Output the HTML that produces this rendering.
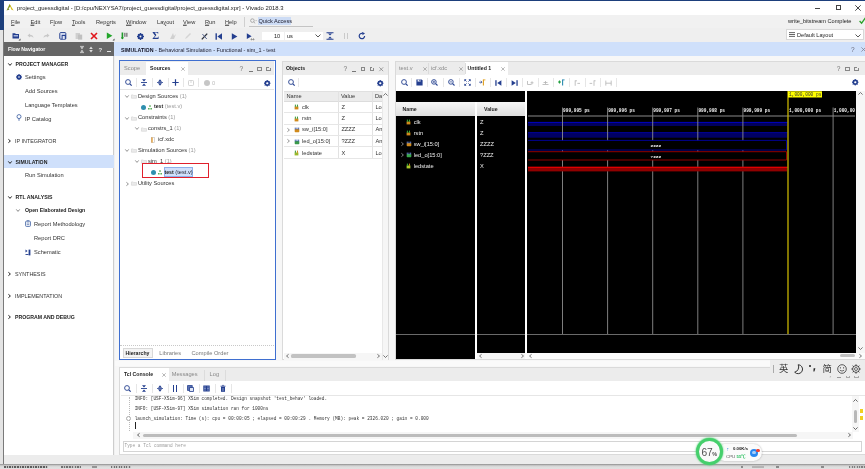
<!DOCTYPE html>
<html><head><meta charset="utf-8"><title>Vivado</title>
<style>
*{box-sizing:border-box;margin:0;padding:0}
html,body{width:865px;height:469px;overflow:hidden;background:#f0f0f0}
body{position:relative;font-family:"Liberation Sans","Noto Sans CJK SC",sans-serif;font-size:5.7px;color:#333;line-height:1}
.a{position:absolute}
#root{position:absolute;left:0;top:0;width:865px;height:469px;will-change:transform;transform:translateZ(0)}
.t{position:absolute;white-space:nowrap;transform:translateY(-40%);line-height:1}
.b{font-weight:bold;font-size:5.2px;color:#222}
.g{color:#999}
.w{color:#eee}
.c{font-family:"Liberation Mono",monospace;font-size:4.47px;color:#333}
svg{position:absolute;overflow:visible}
svg.sig{transform:scale(.86)}
</style></head><body><div id="root">
<!-- window frame / backdrop -->
<div class="a" id="desk" style="left:0;top:0;width:4px;height:30px;background:#1d3f7c"></div>
<div class="a" style="left:0;top:30px;width:3px;height:439px;background:#e4e4e4"></div>
<div class="a" style="left:2.8px;top:30px;width:1.4px;height:434px;background:#7a7a7a"></div>
<div class="a" style="left:0;top:0;width:865px;height:1px;background:#1d3f7c"></div>
<!-- title bar -->
<div class="a" id="title" style="left:4px;top:1px;width:861px;height:14px;background:#fff"></div>
<svg style="left:6px;top:3px" width="8" height="9" viewBox="0 0 8 9"><path d="M0.5 7.5 L3.6 1 L5 3.6 L2.6 5 Z" fill="#8a9a1c"/><path d="M3.6 1 L7.6 7.6 L5.2 6.4 Z" fill="#d8c020"/><path d="M0.5 7.5 L2.6 5 L3.4 6.6Z" fill="#6a7a10"/></svg>
<div class="t" style="left:17px;top:8px;font-size:5.9px;color:#222" id="ttl">project_guessdigital - [D:/cpu/NEXYSA7/project_guessdigital/project_guessdigital.xpr] - Vivado 2018.3</div>
<div class="a" style="left:815px;top:7.5px;width:5px;height:1px;background:#444"></div>
<div class="a" style="left:835.5px;top:4.5px;width:5.5px;height:5.5px;border:1px solid #444"></div>
<svg style="left:855px;top:4.5px" width="6" height="6" viewBox="0 0 6 6"><path d="M0.3 0.3L5.7 5.7M5.7 0.3L0.3 5.7" stroke="#333" stroke-width="0.9" fill="none"/></svg>

<!-- menu + toolbar -->
<div class="a" id="menubar" style="left:4px;top:15px;width:861px;height:13px;background:#f1f1f1"></div>
<div class="a" id="toolbar" style="left:4px;top:28px;width:861px;height:14px;background:#efefef"></div>
<div class="t m" style="left:11px;top:21.5px"><u>F</u>ile</div>
<div class="t m" style="left:30.5px;top:21.5px"><u>E</u>dit</div>
<div class="t m" style="left:50px;top:21.5px">F<u>l</u>ow</div>
<div class="t m" style="left:72px;top:21.5px"><u>T</u>ools</div>
<div class="t m" style="left:96px;top:21.5px">Rep<u>o</u>rts</div>
<div class="t m" style="left:126px;top:21.5px"><u>W</u>indow</div>
<div class="t m" style="left:157px;top:21.5px">La<u>y</u>out</div>
<div class="t m" style="left:183px;top:21.5px"><u>V</u>iew</div>
<div class="t m" style="left:205px;top:21.5px"><u>R</u>un</div>
<div class="t m" style="left:225px;top:21.5px"><u>H</u>elp</div>
<div class="a" style="left:244px;top:17px;width:1px;height:10px;background:#d0d0d0"></div>
<svg style="left:250px;top:18px" width="7" height="6" viewBox="0 0 7 6"><circle cx="2.4" cy="2.6" r="1.8" fill="none" stroke="#999" stroke-width="0.8"/><path d="M3.8 4L5 5.2" stroke="#999" stroke-width="0.8"/><path d="M5.5 2.6h1.3" stroke="#999" stroke-width="0.6"/></svg>
<div class="a" style="left:258px;top:17px;width:33px;height:8px;background:#cddcf5"></div>
<div class="t" style="left:258.5px;top:21px;font-size:5.6px;color:#223">Quick Access</div>
<div class="a" style="left:249px;top:26px;width:64px;height:1px;background:#c4c4c4"></div>
<div class="t" style="left:788px;top:21px;font-size:5.6px;color:#222" id="wbc">write_bitstream Complete</div>
<svg style="left:858.5px;top:17px" width="7" height="7" viewBox="0 0 7 7"><path d="M0.6 4L2.6 6.2L6.4 0.8" stroke="#2aa22a" stroke-width="1.3" fill="none"/></svg>
<!-- toolbar icons -->
<svg style="left:12px;top:32px" width="9" height="9" viewBox="0 0 9 9"><path d="M0.5 1.2h2.6l0.7 0.8h3.2v4.6h-6.5Z" fill="#243f8f"/><rect x="1.6" y="3.2" width="4.4" height="1.2" fill="#c8d4ee"/><path d="M6.5 8.5h2v-2z" fill="#444"/></svg>
<svg style="left:27px;top:33px" width="7" height="6" viewBox="0 0 7 6"><path d="M0.5 2.5L3 0.5V1.8C5 1.8 6.3 3 6.5 5C5.6 3.8 4.6 3.4 3 3.4V4.6Z" fill="#c8c8c8"/></svg>
<svg style="left:43px;top:33px" width="7" height="6" viewBox="0 0 7 6"><path d="M6.5 2.5L4 0.5V1.8C2 1.8 .7 3 .5 5C1.4 3.8 2.4 3.4 4 3.4V4.6Z" fill="#c8c8c8"/></svg>
<svg style="left:59px;top:32px" width="8" height="8" viewBox="0 0 8 8"><rect x="0.8" y="0.6" width="6" height="6.6" rx="0.8" fill="#e4eaf8" stroke="#243f8f" stroke-width="1"/><rect x="2.6" y="2.8" width="4.2" height="4.4" fill="#243f8f"/><rect x="3.6" y="4" width="2.2" height="3.2" fill="#dfe6f5"/></svg>
<svg style="left:75px;top:32px" width="8" height="8" viewBox="0 0 8 8"><rect x="0.6" y="1" width="4.4" height="6" fill="#cfcfcf"/><rect x="3" y="2.6" width="4.2" height="5" fill="#c0c0c0"/></svg>
<svg style="left:90px;top:32px" width="8" height="8" viewBox="0 0 8 8"><path d="M1 1L7 7M7 1L1 7" stroke="#e0161c" stroke-width="1.6"/></svg>
<svg style="left:106px;top:32px" width="9" height="9" viewBox="0 0 9 9"><path d="M0.8 0.6L6.4 3.8L0.8 7Z" fill="#22a52a"/><path d="M6.5 8.5h2v-2z" fill="#444"/></svg>
<svg style="left:121px;top:32px" width="8" height="8" viewBox="0 0 8 8"><rect x="0.6" y="0.5" width="1.6" height="6.5" fill="#1f9a2a"/><rect x="3.2" y="0.8" width="1.3" height="4" fill="#777"/><rect x="5.2" y="0.8" width="1.3" height="4" fill="#777"/><path d="M0 5.2h2.8L1.4 7.6Z" fill="#1f9a2a"/></svg>
<svg style="left:137px;top:32.5px" width="7" height="7" viewBox="0 0 8 8" id="gear1"><circle cx="4" cy="4" r="2.4" fill="none" stroke="#243f8f" stroke-width="2"/><path d="M4 0v8M0 4h8M1.2 1.2l5.6 5.6M6.8 1.2L1.2 6.8" stroke="#243f8f" stroke-width="1.2"/><circle cx="4" cy="4" r="1.1" fill="#efefef"/></svg>
<div class="t" style="left:152.3px;top:35.6px;font-size:10.5px;color:#243f8f;font-weight:bold;font-family:'Liberation Serif',serif;transform:translateY(-50%)">Σ</div>
<svg style="left:169px;top:32px" width="8" height="8" viewBox="0 0 8 8"><path d="M1 7L4 1L5 4L7 2L5 7Z" fill="#d0d0d0"/></svg>
<svg style="left:184px;top:32px" width="8" height="8" viewBox="0 0 8 8"><path d="M1 7L2 5L6 1L7 2L3 6Z" fill="#d4d4d4"/></svg>
<svg style="left:200.5px;top:32.5px" width="7" height="7" viewBox="0 0 7 7"><path d="M0.8 6.4L6.2 0.6" stroke="#2a2f3a" stroke-width="1.3"/><path d="M1.4 1L5.8 6" stroke="#4a5a8a" stroke-width="0.9"/></svg>
<svg style="left:215px;top:32.5px" width="8" height="7" viewBox="0 0 8 7"><rect x="0.5" y="0.3" width="1.4" height="6.4" fill="#243f8f"/><path d="M7 0.3L2.4 3.5L7 6.7Z" fill="#243f8f"/></svg>
<svg style="left:231px;top:32.5px" width="7" height="7" viewBox="0 0 7 7"><path d="M0.8 0.3L6.4 3.5L0.8 6.7Z" fill="#243f8f"/></svg>
<svg style="left:246px;top:32.5px" width="9" height="8" viewBox="0 0 9 8"><path d="M0.8 0.3L5.6 3.2L0.8 6.1Z" fill="#243f8f"/><path d="M4.5 6.5h4M5.5 5.2v2.2M7.5 5.2v2.2" stroke="#888" stroke-width="0.7"/></svg>
<div class="a" style="left:261.5px;top:31.5px;width:22px;height:8px;background:#fff"></div>
<div class="t" style="left:274px;top:35.5px;font-size:5.6px;color:#222">10</div>
<div class="a" style="left:285px;top:31.5px;width:37.5px;height:8px;background:#fff"></div>
<div class="t" style="left:287px;top:35.5px;font-size:5.6px;color:#222">us</div>
<svg style="left:315px;top:33.8px" width="6" height="4" viewBox="0 0 6 4"><path d="M0.5 0.5L3 3L5.5 0.5" stroke="#444" stroke-width="0.9" fill="none"/></svg>
<svg style="left:326px;top:32px" width="8" height="8" viewBox="0 0 8 8"><path d="M0.5 0.8h7M0.5 7.2h7" stroke="#243f8f" stroke-width="1.1"/><path d="M2 1.5h4L4 3.6Z M2 6.5h4L4 4.4Z" fill="#243f8f"/></svg>
<div class="a" style="left:344px;top:32.5px;width:1px;height:6.5px;background:#cacaca"></div>
<div class="a" style="left:347px;top:32.5px;width:1px;height:6.5px;background:#cacaca"></div>
<svg style="left:358px;top:32px" width="8" height="8" viewBox="0 0 8 8"><path d="M6.6 4A2.7 2.7 0 1 1 4.6 1.4" stroke="#243f8f" stroke-width="1.2" fill="none"/><path d="M4 0L7 1.2L4.6 3.2Z" fill="#243f8f"/></svg>
<!-- default layout combo -->
<div class="a" style="left:786px;top:29px;width:78px;height:11px;background:#fff;border:1px solid #d8d8d8"></div>
<svg style="left:789px;top:32px" width="6" height="5" viewBox="0 0 6 5"><path d="M0 0.6h6M0 2.5h6M0 4.4h6" stroke="#555" stroke-width="0.9"/></svg>
<div class="t" style="left:797px;top:35px;font-size:5.6px;color:#222">Default Layout</div>
<svg style="left:855px;top:33.5px" width="6" height="4" viewBox="0 0 6 4"><path d="M0.5 0.5L3 3L5.5 0.5" stroke="#444" stroke-width="0.9" fill="none"/></svg>

<!-- flow navigator -->
<div class="a" id="fnhead" style="left:4px;top:42px;width:110px;height:14px;background:#666"></div>
<div class="a" id="fnbody" style="left:4px;top:56px;width:110px;height:399px;background:#fff"></div>
<div class="t b" style="left:8px;top:49px;color:#fff">Flow Navigator</div>
<svg style="left:80px;top:46px" width="4" height="7" viewBox="0 0 4 7"><path d="M0 0.4h4M0 6.6h4" stroke="#ddd" stroke-width="0.8"/><path d="M0.4 1.2h3.2L2 3.2Z M0.4 5.8h3.2L2 3.8Z" fill="#ddd"/></svg>
<svg style="left:89px;top:46px" width="4" height="7" viewBox="0 0 4 7"><path d="M0.2 3h3.6L2 0.6Z M0.2 4h3.6L2 6.4Z" fill="#ddd"/></svg>
<div class="t b" style="left:98.5px;top:49px;color:#e4e4e4;font-size:6px">?</div>
<div class="a" style="left:107px;top:51px;width:4px;height:1px;background:#e4e4e4"></div>
<!-- splitter -->
<div class="a" style="left:113px;top:56px;width:1px;height:399px;background:#cdcdcd"></div>
<!-- items -->
<svg style="left:7.5px;top:62.5px" width="4" height="3" viewBox="0 0 4 3"><path d="M0.3 0.4L2 2.4L3.7 0.4" stroke="#222" stroke-width="1" fill="none"/></svg>
<div class="t b" style="left:15.5px;top:64px">PROJECT MANAGER</div>
<svg style="left:16px;top:73.5px" width="6" height="6" viewBox="0 0 8 8"><circle cx="4" cy="4" r="2.4" fill="none" stroke="#243f8f" stroke-width="2"/><path d="M4 0v8M0 4h8M1.2 1.2l5.6 5.6M6.8 1.2L1.2 6.8" stroke="#243f8f" stroke-width="1.2"/><circle cx="4" cy="4" r="1.1" fill="#fff"/></svg>
<div class="t" style="left:25px;top:76.5px">Settings</div>
<div class="t" style="left:25px;top:91px">Add Sources</div>
<div class="t" style="left:25px;top:104.5px">Language Templates</div>
<svg style="left:16px;top:114px" width="6" height="7" viewBox="0 0 6 7"><circle cx="3" cy="2.6" r="2" fill="none" stroke="#4a6aa8" stroke-width="0.9"/><path d="M3 4.6v2.2" stroke="#4a6aa8" stroke-width="0.9"/></svg>
<div class="t" style="left:25px;top:118.5px">IP Catalog</div>
<svg style="left:8px;top:139px" width="3" height="4" viewBox="0 0 3 4"><path d="M0.4 0.3L2.4 2L0.4 3.7" stroke="#222" stroke-width="1" fill="none"/></svg>
<div class="t" style="left:15px;top:141px;font-size:5.4px">IP INTEGRATOR</div>
<div class="a" style="left:4px;top:155px;width:110px;height:13px;background:#cfe0fb"></div>
<svg style="left:7.5px;top:160.5px" width="4" height="3" viewBox="0 0 4 3"><path d="M0.3 0.4L2 2.4L3.7 0.4" stroke="#222" stroke-width="1" fill="none"/></svg>
<div class="t b" style="left:15.5px;top:162px">SIMULATION</div>
<div class="t" style="left:25px;top:174.5px">Run Simulation</div>
<svg style="left:7.5px;top:195.5px" width="4" height="3" viewBox="0 0 4 3"><path d="M0.3 0.4L2 2.4L3.7 0.4" stroke="#222" stroke-width="1" fill="none"/></svg>
<div class="t b" style="left:15.5px;top:197px">RTL ANALYSIS</div>
<svg style="left:16px;top:208.5px" width="4" height="3" viewBox="0 0 4 3"><path d="M0.3 0.4L2 2.4L3.7 0.4" stroke="#555" stroke-width="0.7" fill="none"/></svg>
<div class="t b" style="left:25px;top:210px">Open Elaborated Design</div>
<svg style="left:25px;top:220px" width="6" height="7" viewBox="0 0 6 7"><rect x="0.6" y="1.2" width="4.8" height="5.2" rx="0.8" fill="none" stroke="#4a6aa8" stroke-width="0.9"/><path d="M1.8 0.6h2.4M1.8 3h2.4M1.8 4.6h2.4" stroke="#4a6aa8" stroke-width="0.7"/></svg>
<div class="t" style="left:34px;top:224px">Report Methodology</div>
<div class="t" style="left:34px;top:238px">Report DRC</div>
<svg style="left:25px;top:248.5px" width="6" height="7" viewBox="0 0 6 7"><path d="M0.5 0.5L2.5 2L0.5 3.5Z" fill="#243f8f"/><rect x="3.6" y="0.6" width="1.8" height="5.8" fill="#243f8f"/><path d="M0.5 5.5h3" stroke="#243f8f" stroke-width="0.9"/></svg>
<div class="t" style="left:34px;top:252px">Schematic</div>
<svg style="left:8px;top:272px" width="3" height="4" viewBox="0 0 3 4"><path d="M0.4 0.3L2.4 2L0.4 3.7" stroke="#222" stroke-width="1" fill="none"/></svg>
<div class="t" style="left:15px;top:274.2px;font-size:5.4px">SYNTHESIS</div>
<svg style="left:8px;top:293.5px" width="3" height="4" viewBox="0 0 3 4"><path d="M0.4 0.3L2.4 2L0.4 3.7" stroke="#222" stroke-width="1" fill="none"/></svg>
<div class="t" style="left:15px;top:295.6px;font-size:5.4px">IMPLEMENTATION</div>
<svg style="left:8px;top:314.5px" width="3" height="4" viewBox="0 0 3 4"><path d="M0.4 0.3L2.4 2L0.4 3.7" stroke="#222" stroke-width="1" fill="none"/></svg>
<div class="t b" style="left:15px;top:316.6px">PROGRAM AND DEBUG</div>

<!-- sim header -->
<div class="a" id="simhead" style="left:114.3px;top:42.4px;width:751px;height:13.4px;background:#cfe0fb"></div>
<div class="t" style="left:121px;top:49.5px;font-size:5.5px;color:#223"><span class="b" style="font-size:5.3px;color:#112">SIMULATION</span> - Behavioral Simulation - Functional - sim_1 - test</div>
<div class="t" style="left:851px;top:49.5px;font-size:6.5px;color:#667">?</div>
<svg style="left:860.5px;top:47px" width="5" height="5" viewBox="0 0 5 5"><path d="M0.4 0.4L4.6 4.6M4.6 0.4L0.4 4.6" stroke="#778" stroke-width="0.7"/></svg>

<!-- main bg -->
<div class="a" id="mainbg" style="left:115px;top:56px;width:750px;height:399px;background:#f7f7f7"></div>
<!-- Sources panel -->
<div class="a" style="left:118.8px;top:60px;width:156.9px;height:300.2px;background:#fff;border:1.4px solid #3f6fd0"></div>
<div class="a" style="left:120.2px;top:61.4px;width:154.2px;height:13.6px;background:#ececec"></div>
<div class="a" style="left:146px;top:61.5px;width:41.5px;height:13.5px;background:#fff"></div>
<div class="t g" style="left:124px;top:68px;color:#888">Scope</div>
<div class="t b" style="left:150px;top:68px">Sources</div>
<svg style="left:180.5px;top:66.5px" width="4" height="4" viewBox="0 0 4 4"><path d="M0.3 0.3L3.7 3.7M3.7 0.3L0.3 3.7" stroke="#888" stroke-width="0.6"/></svg>
<div class="t" style="left:239.5px;top:68.5px;font-size:6.6px;color:#707070">?</div>
<div class="a" style="left:248.5px;top:70.5px;width:4px;height:1px;background:#777"></div>
<div class="a" style="left:257px;top:66.5px;width:4.5px;height:4.5px;border:1px solid #888"></div>
<div class="a" style="left:266px;top:67px;width:4.5px;height:4px;border:1px solid #888"></div>
<div class="a" style="left:268.5px;top:66px;width:3px;height:2px;background:#ececec"></div>
<!-- toolbar -->
<svg style="left:124.5px;top:79px" width="7" height="7" viewBox="0 0 7 7"><circle cx="3" cy="3" r="2.4" fill="none" stroke="#243f8f" stroke-width="0.9"/><path d="M4.8 4.8L6.7 6.7" stroke="#243f8f" stroke-width="1.2"/></svg>
<div class="a" style="left:136px;top:78px;width:1px;height:9px;background:#e6e6e6"></div>
<svg style="left:141px;top:79px" width="6" height="7" viewBox="0 0 6 7"><path d="M0 3.5h6" stroke="#243f8f" stroke-width="0.9"/><path d="M1 0.2h4L3 2.6Z M1 6.8h4L3 4.4Z" fill="#243f8f"/></svg>
<div class="a" style="left:152px;top:78px;width:1px;height:9px;background:#e6e6e6"></div>
<svg style="left:156.5px;top:79px" width="6" height="7" viewBox="0 0 6 7"><path d="M0 3.5h6" stroke="#243f8f" stroke-width="0.8"/><path d="M1 2.7h4L3 0.2Z M1 4.3h4L3 6.8Z" fill="#243f8f"/></svg>
<div class="a" style="left:167.5px;top:78px;width:1px;height:9px;background:#e6e6e6"></div>
<svg style="left:171.5px;top:79px" width="7" height="7" viewBox="0 0 7 7"><path d="M3.5 0.3v6.4M0.3 3.5h6.4" stroke="#243f8f" stroke-width="1.2"/></svg>
<div class="a" style="left:183px;top:78px;width:1px;height:9px;background:#e6e6e6"></div>
<svg style="left:188px;top:79.5px" width="6" height="6" viewBox="0 0 6 6"><rect x="0.5" y="0.5" width="5" height="5" rx="0.8" fill="none" stroke="#c8c8c8" stroke-width="0.8"/><path d="M2 2h2" stroke="#c8c8c8" stroke-width="0.7"/></svg>
<div class="a" style="left:198px;top:78px;width:1px;height:9px;background:#e6e6e6"></div>
<div class="a" style="left:203.5px;top:80px;width:6px;height:6px;border-radius:3px;background:#c6c6c6"></div>
<div class="t" style="left:212px;top:82.8px;color:#bbb">0</div>
<svg style="left:263.5px;top:79.5px" width="6.5" height="6.5" viewBox="0 0 8 8"><circle cx="4" cy="4" r="2.4" fill="none" stroke="#243f8f" stroke-width="2"/><path d="M4 0v8M0 4h8M1.2 1.2l5.6 5.6M6.8 1.2L1.2 6.8" stroke="#243f8f" stroke-width="1.2"/><circle cx="4" cy="4" r="1.35" fill="#fff"/></svg>
<div class="a" style="left:120.2px;top:88.8px;width:154.2px;height:1px;background:#e4e4e4"></div>
<!-- tree -->
<svg style="left:125px;top:95px" width="4" height="3" viewBox="0 0 4 3"><path d="M0.3 0.4L2 2.4L3.7 0.4" stroke="#666" stroke-width="0.7" fill="none"/></svg>
<svg class="fold" style="left:130.5px;top:94px" width="6" height="4.6" viewBox="0 0 5 4"><path d="M0.3 0.8h1.5l0.5 0.6h2.4v2.3h-4.4Z" fill="#ececec" stroke="#cfcfcf" stroke-width="0.5"/></svg>
<div class="t" style="left:138px;top:96.2px">Design Sources <span class="g">(1)</span></div>
<div class="a" style="left:140.5px;top:104.5px;width:5px;height:5px;border-radius:3px;background:#2f8fae"></div>
<svg style="left:147.5px;top:104.5px" width="4" height="5" viewBox="0 0 4 5"><rect x="1.2" y="0.3" width="1.6" height="1.5" fill="#5ab05a"/><rect x="0" y="3" width="1.6" height="1.5" fill="#5ab05a"/><rect x="2.4" y="3" width="1.6" height="1.5" fill="#5ab05a"/></svg>
<div class="t" style="left:154px;top:106.4px"><span class="b">test</span> <span class="g">(test.v)</span></div>
<svg style="left:125px;top:116.5px" width="4" height="3" viewBox="0 0 4 3"><path d="M0.3 0.4L2 2.4L3.7 0.4" stroke="#666" stroke-width="0.7" fill="none"/></svg>
<svg style="left:130.5px;top:115.8px" width="6" height="4.6" viewBox="0 0 5 4"><path d="M0.3 0.8h1.5l0.5 0.6h2.4v2.3h-4.4Z" fill="#ececec" stroke="#cfcfcf" stroke-width="0.5"/></svg>
<div class="t" style="left:138px;top:117.4px">Constraints <span class="g">(1)</span></div>
<svg style="left:135px;top:127.3px" width="4" height="3" viewBox="0 0 4 3"><path d="M0.3 0.4L2 2.4L3.7 0.4" stroke="#666" stroke-width="0.7" fill="none"/></svg>
<svg style="left:140.5px;top:126.6px" width="6" height="4.6" viewBox="0 0 5 4"><path d="M0.3 0.8h1.5l0.5 0.6h2.4v2.3h-4.4Z" fill="#ececec" stroke="#cfcfcf" stroke-width="0.5"/></svg>
<div class="t" style="left:148px;top:128px">constrs_1 <span class="g">(1)</span></div>
<svg style="left:150.5px;top:136.5px" width="4" height="6" viewBox="0 0 4 6"><rect x="0.4" y="0.4" width="3.2" height="5.2" fill="#fff" stroke="#bbb" stroke-width="0.6"/><rect x="0.4" y="0.4" width="1.2" height="5.2" fill="#e09020"/></svg>
<div class="t" style="left:158px;top:138.8px">icf.xdc</div>
<svg style="left:125px;top:149px" width="4" height="3" viewBox="0 0 4 3"><path d="M0.3 0.4L2 2.4L3.7 0.4" stroke="#666" stroke-width="0.7" fill="none"/></svg>
<svg style="left:130.5px;top:148.3px" width="6" height="4.6" viewBox="0 0 5 4"><path d="M0.3 0.8h1.5l0.5 0.6h2.4v2.3h-4.4Z" fill="#ececec" stroke="#cfcfcf" stroke-width="0.5"/></svg>
<div class="t" style="left:138px;top:149.8px">Simulation Sources <span class="g">(1)</span></div>
<svg style="left:135px;top:159.8px" width="4" height="3" viewBox="0 0 4 3"><path d="M0.3 0.4L2 2.4L3.7 0.4" stroke="#666" stroke-width="0.7" fill="none"/></svg>
<svg style="left:140.5px;top:159.1px" width="6" height="4.6" viewBox="0 0 5 4"><path d="M0.3 0.8h1.5l0.5 0.6h2.4v2.3h-4.4Z" fill="#ececec" stroke="#cfcfcf" stroke-width="0.5"/></svg>
<div class="t" style="left:148px;top:161.3px">sim_1 <span class="g">(1)</span></div>
<div class="a" style="left:150.5px;top:169.5px;width:5px;height:5px;border-radius:3px;background:#2f8fae"></div>
<svg style="left:157.5px;top:169.5px" width="4" height="5" viewBox="0 0 4 5"><rect x="1.2" y="0.3" width="1.6" height="1.5" fill="#5ab05a"/><rect x="0" y="3" width="1.6" height="1.5" fill="#5ab05a"/><rect x="2.4" y="3" width="1.6" height="1.5" fill="#5ab05a"/></svg>
<div class="a" style="left:163.5px;top:167px;width:29px;height:10px;background:#cfe0fb;border:1px solid #8fb0ea"></div>
<div class="t" style="left:164.5px;top:172px;color:#223"><span class="b">test</span> (test.v)</div>
<div class="a" style="left:141.5px;top:162.5px;width:67px;height:15.5px;border:1.3px solid #e0202c"></div>
<svg style="left:125.5px;top:181.5px" width="3" height="4" viewBox="0 0 3 4"><path d="M0.4 0.3L2.4 2L0.4 3.7" stroke="#666" stroke-width="0.7" fill="none"/></svg>
<svg style="left:130.5px;top:181px" width="6" height="4.6" viewBox="0 0 5 4"><path d="M0.3 0.8h1.5l0.5 0.6h2.4v2.3h-4.4Z" fill="#ececec" stroke="#cfcfcf" stroke-width="0.5"/></svg>
<div class="t" style="left:138px;top:183.2px">Utility Sources</div>
<!-- bottom tabs -->
<div class="a" style="left:120.2px;top:345px;width:154.2px;height:0;border-top:1px dotted #c8c8c8"></div>
<div class="a" style="left:123px;top:347.5px;width:30px;height:10px;background:#f4f4f4;border:1px solid #d8d8d8"></div>
<div class="t b" style="left:125.5px;top:352.6px">Hierarchy</div>
<div class="t" style="left:159.3px;top:352.6px;color:#777">Libraries</div>
<div class="t" style="left:191.5px;top:352.6px;color:#777">Compile Order</div>

<!-- Objects panel -->
<div class="a" style="left:281.8px;top:60.5px;width:107.2px;height:299.5px;background:#fff;border:1px solid #dadada"></div>
<div class="a" style="left:282.8px;top:61.5px;width:105.2px;height:13.5px;background:#ececec"></div>
<div class="t b" style="left:286px;top:68px">Objects</div>
<div class="t" style="left:343.5px;top:69.0px;font-size:6.6px;color:#707070">?</div>
<div class="a" style="left:352px;top:70.5px;width:4px;height:1px;background:#777"></div>
<div class="a" style="left:360.5px;top:66.5px;width:4.5px;height:4.5px;border:1px solid #888"></div>
<div class="a" style="left:369.5px;top:67px;width:4.5px;height:4px;border:1px solid #888"></div>
<div class="a" style="left:372px;top:66px;width:3px;height:2px;background:#ececec"></div>
<svg style="left:379px;top:66.5px" width="4.5" height="4.5" viewBox="0 0 4 4"><path d="M0.3 0.3L3.7 3.7M3.7 0.3L0.3 3.7" stroke="#777" stroke-width="0.6"/></svg>
<svg style="left:287.5px;top:79px" width="7" height="7" viewBox="0 0 7 7"><circle cx="3" cy="3" r="2.4" fill="none" stroke="#243f8f" stroke-width="0.9"/><path d="M4.8 4.8L6.7 6.7" stroke="#243f8f" stroke-width="1.2"/></svg>
<div class="a" style="left:298px;top:78px;width:1px;height:9px;background:#e6e6e6"></div>
<svg style="left:376.5px;top:79.5px" width="6.5" height="6.5" viewBox="0 0 8 8"><circle cx="4" cy="4" r="2.4" fill="none" stroke="#243f8f" stroke-width="2"/><path d="M4 0v8M0 4h8M1.2 1.2l5.6 5.6M6.8 1.2L1.2 6.8" stroke="#243f8f" stroke-width="1.2"/><circle cx="4" cy="4" r="1.35" fill="#fff"/></svg>
<!-- table -->
<div class="a" style="left:283.5px;top:90.5px;width:98px;height:11px;background:#ececec;border-top:1px solid #e0e0e0;border-bottom:1px solid #dcdcdc"></div>
<div class="a" style="left:338px;top:90.5px;width:1px;height:67.5px;background:#e2e2e2"></div>
<div class="a" style="left:372px;top:90.5px;width:1px;height:67.5px;background:#e2e2e2"></div>
<div class="t" style="left:286.5px;top:96.3px">Name</div>
<div class="t" style="left:341px;top:96.3px">Value</div>
<div class="t" style="left:375px;top:96.3px">Da</div>
<div class="a" style="left:283.5px;top:112.2px;width:98px;height:1px;background:#e6e6e6"></div>
<div class="a" style="left:283.5px;top:123.6px;width:98px;height:1px;background:#e6e6e6"></div>
<div class="a" style="left:283.5px;top:135px;width:98px;height:1px;background:#e6e6e6"></div>
<div class="a" style="left:283.5px;top:146.4px;width:98px;height:1px;background:#e6e6e6"></div>
<div class="a" style="left:283.5px;top:157.8px;width:98px;height:1px;background:#e6e6e6"></div>
<svg class="sig" style="left:294px;top:104.2px" width="5" height="6" viewBox="0 0 5 6"><rect x="0.3" y="2.4" width="4.4" height="3.4" fill="#d08a1c"/><rect x="0.6" y="0.2" width="1.2" height="2.6" fill="#3a9a3a"/><rect x="3" y="0.2" width="1.2" height="2.6" fill="#3a9a3a"/></svg>
<div class="t" style="left:302px;top:107.2px">clk</div><div class="t" style="left:341.4px;top:107.2px">Z</div><div class="t" style="left:375.4px;top:107.2px">Lo</div>
<svg class="sig" style="left:294px;top:115.6px" width="5" height="6" viewBox="0 0 5 6"><rect x="0.3" y="2.4" width="4.4" height="3.4" fill="#d08a1c"/><rect x="0.6" y="0.2" width="1.2" height="2.6" fill="#3a9a3a"/><rect x="3" y="0.2" width="1.2" height="2.6" fill="#3a9a3a"/></svg>
<div class="t" style="left:302px;top:118px">rstn</div><div class="t" style="left:341.4px;top:118px">Z</div><div class="t" style="left:375.4px;top:118px">Lo</div>
<svg style="left:287px;top:127.5px" width="3" height="4" viewBox="0 0 3 4"><path d="M0.4 0.3L2.4 2L0.4 3.7" stroke="#666" stroke-width="0.7" fill="none"/></svg>
<svg class="sig" style="left:293.5px;top:127.1px" width="6" height="6" viewBox="0 0 6 6"><rect x="0.3" y="1.8" width="5.4" height="3.8" rx="0.8" fill="#d08a1c"/><rect x="0.4" y="0.2" width="1.1" height="2.2" fill="#3a5aa8"/><rect x="2.4" y="0.2" width="1.1" height="2.2" fill="#3a5aa8"/><rect x="4.4" y="0.2" width="1.1" height="2.2" fill="#3a5aa8"/></svg>
<div class="t" style="left:302px;top:129.4px">sw_i[15:0]</div><div class="t" style="left:341.4px;top:129.4px">ZZZZ</div><div class="t" style="left:375.4px;top:129.4px">An</div>
<svg style="left:287px;top:138.9px" width="3" height="4" viewBox="0 0 3 4"><path d="M0.4 0.3L2.4 2L0.4 3.7" stroke="#666" stroke-width="0.7" fill="none"/></svg>
<svg class="sig" style="left:293.5px;top:138.5px" width="6" height="6" viewBox="0 0 6 6"><rect x="0.3" y="1.8" width="5.4" height="3.8" rx="0.8" fill="#3a9a4a"/><rect x="0.4" y="0.2" width="1.1" height="2.2" fill="#3a5aa8"/><rect x="2.4" y="0.2" width="1.1" height="2.2" fill="#3a5aa8"/><rect x="4.4" y="0.2" width="1.1" height="2.2" fill="#3a5aa8"/></svg>
<div class="t" style="left:302px;top:140.8px">led_o[15:0]</div><div class="t" style="left:341.4px;top:140.8px">?ZZZ</div><div class="t" style="left:375.4px;top:140.8px">An</div>
<svg class="sig" style="left:294px;top:149.8px" width="5" height="6" viewBox="0 0 5 6"><rect x="0.3" y="2.4" width="4.4" height="3.4" fill="#9ab82a"/><rect x="0.6" y="0.2" width="1.2" height="2.6" fill="#3a9a3a"/><rect x="3" y="0.2" width="1.2" height="2.6" fill="#d08a1c"/></svg>
<div class="t" style="left:302px;top:152.8px">ledstate</div><div class="t" style="left:341.4px;top:152.8px">X</div><div class="t" style="left:375.4px;top:152.8px">Lo</div>
<!-- scrollbars -->
<div class="a" style="left:381.5px;top:90.5px;width:6.5px;height:269px;background:#f6f6f6;border-left:1px solid #e8e8e8"></div>
<svg style="left:382.5px;top:93px" width="5" height="3" viewBox="0 0 5 3"><path d="M0.4 2.6L2.5 0.5L4.6 2.6" stroke="#555" stroke-width="0.8" fill="none"/></svg>
<svg style="left:382.5px;top:354.5px" width="5" height="3" viewBox="0 0 5 3"><path d="M0.4 0.4L2.5 2.5L4.6 0.4" stroke="#555" stroke-width="0.8" fill="none"/></svg>
<div class="a" style="left:283.5px;top:352.5px;width:98px;height:7px;background:#f6f6f6"></div>
<svg style="left:285.5px;top:354px" width="3" height="4" viewBox="0 0 3 4"><path d="M2.6 0.3L0.5 2L2.6 3.7" stroke="#555" stroke-width="0.8" fill="none"/></svg>
<div class="a" style="left:291px;top:354.4px;width:65px;height:3.2px;border-radius:1.6px;background:#c2c2c2"></div>
<svg style="left:376.5px;top:354px" width="3" height="4" viewBox="0 0 3 4"><path d="M0.4 0.3L2.5 2L0.4 3.7" stroke="#555" stroke-width="0.8" fill="none"/></svg>

<!-- Wave panel -->
<div class="a" style="left:395px;top:60.5px;width:470px;height:299.5px;background:#fff;border:1px solid #dadada;border-right:0"></div>
<div class="a" style="left:396px;top:61.5px;width:469px;height:13.5px;background:#ececec"></div>
<div class="a" style="left:465px;top:61.5px;width:43px;height:13.5px;background:#fff"></div>
<div class="a" style="left:427.8px;top:63px;width:1px;height:11px;background:#dcdcdc"></div>
<div class="a" style="left:464.5px;top:63px;width:1px;height:11px;background:#dcdcdc"></div>
<div class="t" style="left:399px;top:68px;color:#888">test.v</div>
<svg style="left:422.5px;top:66.5px" width="4" height="4" viewBox="0 0 4 4"><path d="M0.3 0.3L3.7 3.7M3.7 0.3L0.3 3.7" stroke="#888" stroke-width="0.6"/></svg>
<div class="t" style="left:431px;top:68px;color:#888">icf.xdc</div>
<svg style="left:458.5px;top:66.5px" width="4" height="4" viewBox="0 0 4 4"><path d="M0.3 0.3L3.7 3.7M3.7 0.3L0.3 3.7" stroke="#888" stroke-width="0.6"/></svg>
<div class="t b" style="left:467.5px;top:68px">Untitled 1</div>
<svg style="left:501px;top:66.5px" width="4" height="4" viewBox="0 0 4 4"><path d="M0.3 0.3L3.7 3.7M3.7 0.3L0.3 3.7" stroke="#888" stroke-width="0.6"/></svg>
<div class="t" style="left:836.8px;top:68.5px;font-size:6.6px;color:#707070">?</div>
<div class="a" style="left:845px;top:66.5px;width:4.5px;height:4.5px;border:1px solid #888"></div>
<div class="a" style="left:854px;top:67px;width:4.5px;height:4px;border:1px solid #888"></div>
<div class="a" style="left:856.5px;top:66px;width:3px;height:2px;background:#ececec"></div>
<!-- wave toolbar -->
<svg style="left:400.5px;top:79px" width="7" height="7" viewBox="0 0 7 7"><circle cx="3" cy="3" r="2.4" fill="none" stroke="#243f8f" stroke-width="0.9"/><path d="M4.8 4.8L6.7 6.7" stroke="#243f8f" stroke-width="1.2"/></svg>
<div class="a" style="left:411px;top:78px;width:1px;height:9px;background:#e6e6e6"></div>
<svg style="left:415.5px;top:79px" width="7" height="7" viewBox="0 0 7 7"><path d="M0.4 0.6h5.2l1 1v5h-6.2Z" fill="#243f8f"/><rect x="1.6" y="0.6" width="3" height="2" fill="#e8ecf6"/><rect x="3.4" y="0.8" width="0.9" height="1.4" fill="#243f8f"/></svg>
<div class="a" style="left:426.5px;top:78px;width:1px;height:9px;background:#e6e6e6"></div>
<svg style="left:431px;top:79px" width="7" height="7" viewBox="0 0 7 7"><circle cx="2.9" cy="2.9" r="2.3" fill="none" stroke="#243f8f" stroke-width="0.9"/><path d="M4.6 4.6L6.5 6.5" stroke="#243f8f" stroke-width="1.1"/><path d="M1.7 2.9h2.4M2.9 1.7v2.4" stroke="#243f8f" stroke-width="0.7"/></svg>
<div class="a" style="left:442.5px;top:78px;width:1px;height:9px;background:#e6e6e6"></div>
<svg style="left:447.5px;top:79px" width="7" height="7" viewBox="0 0 7 7"><circle cx="2.9" cy="2.9" r="2.3" fill="none" stroke="#243f8f" stroke-width="0.9"/><path d="M4.6 4.6L6.5 6.5" stroke="#243f8f" stroke-width="1.1"/><path d="M1.7 2.9h2.4" stroke="#243f8f" stroke-width="0.7"/></svg>
<div class="a" style="left:458.5px;top:78px;width:1px;height:9px;background:#e6e6e6"></div>
<svg style="left:463.5px;top:79px" width="7" height="7" viewBox="0 0 7 7"><path d="M0.3 0.3h2.2L0.3 2.5ZM6.7 0.3v2.2L4.5 0.3ZM0.3 6.7v-2.2L2.5 6.7ZM6.7 6.7h-2.2L6.7 4.5Z" fill="#243f8f"/><path d="M1 1L2.6 2.6M6 1L4.4 2.6M1 6L2.6 4.4M6 6L4.4 4.4" stroke="#243f8f" stroke-width="0.8"/></svg>
<div class="a" style="left:474.5px;top:78px;width:1px;height:9px;background:#e6e6e6"></div>
<svg style="left:478.5px;top:79px" width="7" height="7" viewBox="0 0 7 7"><path d="M0.2 3.2h2.6M1.8 2L3 3.2L1.8 4.4" stroke="#243f8f" stroke-width="0.8" fill="none"/><path d="M4.4 0.4v6.2" stroke="#e0a020" stroke-width="1.1"/><path d="M4.4 0.9h2" stroke="#e0a020" stroke-width="0.9"/></svg>
<div class="a" style="left:490px;top:78px;width:1px;height:9px;background:#e6e6e6"></div>
<svg style="left:494.5px;top:79.5px" width="7" height="6" viewBox="0 0 7 6"><rect x="0.3" y="0.2" width="1.3" height="5.6" fill="#243f8f"/><path d="M6.4 0.2L2.2 3L6.4 5.8Z" fill="#243f8f"/></svg>
<div class="a" style="left:506px;top:78px;width:1px;height:9px;background:#e6e6e6"></div>
<svg style="left:510.5px;top:79.5px" width="7" height="6" viewBox="0 0 7 6"><rect x="5.4" y="0.2" width="1.3" height="5.6" fill="#243f8f"/><path d="M0.6 0.2L4.8 3L0.6 5.8Z" fill="#243f8f"/></svg>
<div class="a" style="left:522px;top:78px;width:1px;height:9px;background:#e6e6e6"></div>
<svg style="left:526.5px;top:79.5px" width="7" height="6" viewBox="0 0 7 6"><path d="M0.5 1v3.5h4M3.5 2.8h3M5 1.3v3" stroke="#b4b4b4" stroke-width="0.8" fill="none"/></svg>
<div class="a" style="left:537.5px;top:78px;width:1px;height:9px;background:#e6e6e6"></div>
<svg style="left:541.5px;top:79.5px" width="7" height="6" viewBox="0 0 7 6"><path d="M0.5 4.5h6M1.5 2.5h4M3.5 1v3" stroke="#b4b4b4" stroke-width="0.8" fill="none"/></svg>
<div class="a" style="left:553px;top:78px;width:1px;height:9px;background:#e6e6e6"></div>
<svg style="left:557.5px;top:79px" width="8" height="7" viewBox="0 0 8 7"><path d="M0 3h3M1.5 1.5v3" stroke="#22a040" stroke-width="1.1" fill="none"/><path d="M4.6 0.4v6.2" stroke="#2a8ab0" stroke-width="1.1"/><path d="M4.6 0.9h2" stroke="#2a8ab0" stroke-width="0.9"/></svg>
<div class="a" style="left:569px;top:78px;width:1px;height:9px;background:#e6e6e6"></div>
<svg style="left:574px;top:79.5px" width="7" height="6" viewBox="0 0 7 6"><path d="M1.2 0.4v5.4M1.2 0.8h1.8M3.4 3.4h2.6" stroke="#b4b4b4" stroke-width="0.8" fill="none"/></svg>
<div class="a" style="left:584.5px;top:78px;width:1px;height:9px;background:#e6e6e6"></div>
<svg style="left:588.5px;top:79.5px" width="7" height="6" viewBox="0 0 7 6"><path d="M5 0.4v5.4M5 0.8h1.6M0.6 3.4h2.6" stroke="#b4b4b4" stroke-width="0.8" fill="none"/></svg>
<div class="a" style="left:600px;top:78px;width:1px;height:9px;background:#e6e6e6"></div>
<svg style="left:604.5px;top:79.5px" width="7" height="6" viewBox="0 0 7 6"><path d="M0.8 0.6v5M6.2 0.6v5M0.8 3.2h5.4" stroke="#b4b4b4" stroke-width="0.8" fill="none"/></svg>
<div class="a" style="left:615.5px;top:78px;width:1px;height:9px;background:#e6e6e6"></div>
<svg style="left:852px;top:79.3px" width="6.5" height="6.5" viewBox="0 0 8 8"><circle cx="4" cy="4" r="2.4" fill="none" stroke="#243f8f" stroke-width="2"/><path d="M4 0v8M0 4h8M1.2 1.2l5.6 5.6M6.8 1.2L1.2 6.8" stroke="#243f8f" stroke-width="1.2"/><circle cx="4" cy="4" r="1.35" fill="#fff"/></svg>
<!-- black areas -->
<div class="a" style="left:396px;top:90.5px;width:79px;height:268.2px;background:#000"></div>
<div class="a" style="left:477px;top:90.5px;width:47.5px;height:262px;background:#000"></div>
<div class="a" style="left:527px;top:90.5px;width:329px;height:262px;background:#000"></div>
<div class="a" style="left:396px;top:90.5px;width:128.5px;height:11.5px;background:#000"></div>
<!-- name/value header -->
<div class="a" style="left:396px;top:101.5px;width:79px;height:14.4px;background:linear-gradient(#f6f6f6,#dedede)"></div>
<div class="a" style="left:477px;top:101.5px;width:47.5px;height:14.4px;background:linear-gradient(#f6f6f6,#dedede)"></div>
<div class="t b" style="left:402.5px;top:109px">Name</div>
<div class="t b" style="left:484px;top:109px">Value</div>
<!-- signal rows -->
<svg class="sig" style="left:406px;top:118.5px" width="5" height="6" viewBox="0 0 5 6"><rect x="0.3" y="2.4" width="4.4" height="3.4" fill="#d08a1c"/><rect x="0.6" y="0.2" width="1.2" height="2.6" fill="#3ab03a"/><rect x="3" y="0.2" width="1.2" height="2.6" fill="#3ab03a"/></svg>
<div class="t w" style="left:413.7px;top:121.6px">clk</div><div class="t w" style="left:480px;top:121.6px">Z</div>
<svg class="sig" style="left:406px;top:129.7px" width="5" height="6" viewBox="0 0 5 6"><rect x="0.3" y="2.4" width="4.4" height="3.4" fill="#d08a1c"/><rect x="0.6" y="0.2" width="1.2" height="2.6" fill="#3ab03a"/><rect x="3" y="0.2" width="1.2" height="2.6" fill="#3ab03a"/></svg>
<div class="t w" style="left:413.7px;top:132.8px">rstn</div><div class="t w" style="left:480px;top:132.8px">Z</div>
<svg style="left:400.5px;top:142px" width="3" height="4" viewBox="0 0 3 4"><path d="M0.4 0.3L2.4 2L0.4 3.7" stroke="#bbb" stroke-width="0.7" fill="none"/></svg>
<svg class="sig" style="left:405.5px;top:140.9px" width="6" height="6" viewBox="0 0 6 6"><rect x="0.3" y="1.8" width="5.4" height="3.8" rx="0.8" fill="#d08a1c"/><rect x="0.4" y="0.2" width="1.1" height="2.2" fill="#6a8ad8"/><rect x="2.4" y="0.2" width="1.1" height="2.2" fill="#6a8ad8"/><rect x="4.4" y="0.2" width="1.1" height="2.2" fill="#6a8ad8"/></svg>
<div class="t w" style="left:413.7px;top:144px">sw_i[15:0]</div><div class="t w" style="left:480px;top:144px">ZZZZ</div>
<svg style="left:400.5px;top:153.2px" width="3" height="4" viewBox="0 0 3 4"><path d="M0.4 0.3L2.4 2L0.4 3.7" stroke="#bbb" stroke-width="0.7" fill="none"/></svg>
<svg class="sig" style="left:405.5px;top:152.1px" width="6" height="6" viewBox="0 0 6 6"><rect x="0.3" y="1.8" width="5.4" height="3.8" rx="0.8" fill="#3aa84a"/><rect x="0.4" y="0.2" width="1.1" height="2.2" fill="#6a8ad8"/><rect x="2.4" y="0.2" width="1.1" height="2.2" fill="#6a8ad8"/><rect x="4.4" y="0.2" width="1.1" height="2.2" fill="#6a8ad8"/></svg>
<div class="t w" style="left:413.7px;top:155.2px">led_o[15:0]</div><div class="t w" style="left:480px;top:155.2px">?ZZZ</div>
<svg class="sig" style="left:406px;top:163.3px" width="5" height="6" viewBox="0 0 5 6"><rect x="0.3" y="2.4" width="4.4" height="3.4" fill="#a8c82a"/><rect x="0.6" y="0.2" width="1.2" height="2.6" fill="#3ab03a"/><rect x="3" y="0.2" width="1.2" height="2.6" fill="#d08a1c"/></svg>
<div class="t w" style="left:413.7px;top:166.4px">ledstate</div><div class="t w" style="left:480px;top:166.4px">X</div>
<!-- bottom line across -->
<div class="a" style="left:396px;top:334.3px;width:79px;height:1px;background:#6a6a6a"></div>
<div class="a" style="left:477px;top:334.3px;width:47.5px;height:1px;background:#6a6a6a"></div>
<div class="a" style="left:527px;top:334.3px;width:329px;height:1px;background:#6a6a6a"></div>
<!-- waveform -->
<svg style="left:527px;top:91px" width="329" height="261.5" viewBox="527 91 329 261.5" id="wavesvg">
<path d="M528 116H855" stroke="#8a8a8a" stroke-width="1"/>
<!-- clk -->
<rect x="528" y="122" width="259" height="4" fill="#00005c"/>
<path d="M528 122.4H787.5" stroke="#0000c8" stroke-width="0.9"/>

<!-- rstn -->
<rect x="528" y="132.3" width="259" height="5.4" fill="#000064"/>
<path d="M528 132.6H787.5" stroke="#0000a8" stroke-width="0.8"/>
<g stroke="#8c8c8c" stroke-width="0.9">
<path d="M562.5 107.5V334M607.6 107.5V334M652.7 107.5V334M697.8 107.5V334M742.9 107.5V334M833.1 107.5V334"/>
</g>
<!-- sw_i bus -->
<path d="M528 140.4H786.5V150H528" stroke="#0000a0" stroke-width="0.9" fill="#000"/>
<!-- led_o bus -->
<path d="M528 151.7H786.5V160H528" stroke="#a00000" stroke-width="0.9" fill="#000"/>
<!-- ledstate -->
<rect x="528" y="166.8" width="259" height="4.6" fill="#900000"/>
<path d="M528 167.4H787.5" stroke="#e00000" stroke-width="1.2"/>
<!-- cursor -->
<path d="M788 91V334" stroke="#c8b400" stroke-width="1.3"/>
<rect x="788" y="91.3" width="34" height="6.2" fill="#ffff00"/>
<g font-family="Liberation Mono, monospace" font-size="4.45" font-weight="bold" fill="#f4f4f4">
<text x="563.1" y="111.5">999,995 ps</text>
<text x="608.2" y="111.5">999,996 ps</text>
<text x="653.3" y="111.5">999,997 ps</text>
<text x="698.4" y="111.5">999,998 ps</text>
<text x="743.5" y="111.5">999,999 ps</text>
<text x="789.1" y="111.5">1,000,000 ps</text>
<text x="833.7" y="111.5">1,000,00</text>
<text x="650.6" y="146.7" font-size="4.4">ZZZZ</text>
<text x="650.6" y="158.2" font-size="4.4">?ZZZ</text>
</g>
<text x="789" y="96.3" font-family="Liberation Mono, monospace" font-size="4.5" fill="#333">1,000,000 ps</text>
</svg>
<!-- scrollbars -->
<div class="a" style="left:856px;top:91px;width:9px;height:261.5px;background:#f6f6f6"></div>
<svg style="left:857.8px;top:92.3px" width="5" height="3" viewBox="0 0 5 3"><path d="M0.4 2.6L2.5 0.5L4.6 2.6" stroke="#555" stroke-width="0.8" fill="none"/></svg>
<svg style="left:858px;top:347px" width="5" height="3" viewBox="0 0 5 3"><path d="M0.4 0.4L2.5 2.5L4.6 0.4" stroke="#555" stroke-width="0.8" fill="none"/></svg>
<div class="a" style="left:477px;top:352.5px;width:47.5px;height:6.5px;background:#f6f6f6"></div>
<div class="a" style="left:527px;top:352.5px;width:338px;height:6.5px;background:#fcfcfc"></div>
<svg style="left:478.5px;top:354px" width="3" height="4" viewBox="0 0 3 4"><path d="M2.6 0.3L0.5 2L2.6 3.7" stroke="#555" stroke-width="0.8" fill="none"/></svg>
<svg style="left:520.5px;top:354px" width="3" height="4" viewBox="0 0 3 4"><path d="M0.4 0.3L2.5 2L0.4 3.7" stroke="#555" stroke-width="0.8" fill="none"/></svg>
<svg style="left:529px;top:354px" width="3" height="4" viewBox="0 0 3 4"><path d="M2.6 0.3L0.5 2L2.6 3.7" stroke="#555" stroke-width="0.8" fill="none"/></svg>
<svg style="left:859px;top:354px" width="3" height="4" viewBox="0 0 3 4"><path d="M0.4 0.3L2.5 2L0.4 3.7" stroke="#555" stroke-width="0.8" fill="none"/></svg>
<div class="a" style="left:839.5px;top:354.3px;width:15.5px;height:3.2px;border-radius:1.6px;background:#c2c2c2"></div>

<!-- IME light band -->
<div class="a" style="left:115px;top:360.5px;width:655px;height:5.5px;background:#fafafa"></div>
<!-- Tcl console panel -->
<div class="a" style="left:119px;top:367.4px;width:746px;height:87.6px;background:#fff;border:1px solid #dadada;border-right:0"></div>
<div class="a" style="left:120px;top:368.4px;width:745px;height:12.6px;background:#ececec"></div>
<div class="a" style="left:120px;top:368.4px;width:48.5px;height:12.6px;background:#fff"></div>
<div class="a" style="left:203.5px;top:369.5px;width:1px;height:11px;background:#dcdcdc"></div>
<div class="a" style="left:225px;top:369.5px;width:1px;height:11px;background:#dcdcdc"></div>
<div class="t b" style="left:124px;top:374px">Tcl Console</div>
<svg style="left:162px;top:372.5px" width="4" height="4" viewBox="0 0 4 4"><path d="M0.3 0.3L3.7 3.7M3.7 0.3L0.3 3.7" stroke="#888" stroke-width="0.6"/></svg>
<div class="t" style="left:171.7px;top:374px;color:#888">Messages</div>
<div class="t" style="left:209.6px;top:374px;color:#888">Log</div>
<!-- toolbar -->
<svg style="left:124.2px;top:385px" width="7" height="7" viewBox="0 0 7 7"><circle cx="3" cy="3" r="2.4" fill="none" stroke="#243f8f" stroke-width="0.9"/><path d="M4.8 4.8L6.7 6.7" stroke="#243f8f" stroke-width="1.2"/></svg>
<svg style="left:140.8px;top:385px" width="6" height="7" viewBox="0 0 6 7"><path d="M0 3.5h6" stroke="#243f8f" stroke-width="0.9"/><path d="M1 0.2h4L3 2.6Z M1 6.8h4L3 4.4Z" fill="#243f8f"/></svg>
<svg style="left:156.6px;top:385px" width="6" height="7" viewBox="0 0 6 7"><path d="M0 3.5h6" stroke="#243f8f" stroke-width="0.8"/><path d="M1 2.7h4L3 0.2Z M1 4.3h4L3 6.8Z" fill="#243f8f"/></svg>
<div class="a" style="left:172.9px;top:385.3px;width:1.5px;height:6.4px;background:#243f8f"></div>
<div class="a" style="left:175.9px;top:385.3px;width:1.5px;height:6.4px;background:#243f8f"></div>
<svg style="left:187.2px;top:385px" width="7" height="7" viewBox="0 0 7 7"><rect x="0.6" y="0.6" width="4.6" height="4.8" fill="#5a72b0" stroke="#243f8f" stroke-width="0.8"/><rect x="2.6" y="2.6" width="3.8" height="3.8" fill="#dfe6f5" stroke="#243f8f" stroke-width="0.8"/></svg>
<svg style="left:203.2px;top:385px" width="7" height="7" viewBox="0 0 7 7"><rect x="0.3" y="0.5" width="6.4" height="6" fill="#243f8f"/><path d="M1.2 2h1.6M1.2 3.5h1.6M1.2 5h1.6M4.2 2h1.6M4.2 3.5h1.6M4.2 5h1.6" stroke="#c8d4ee" stroke-width="0.6"/></svg>
<svg style="left:219.5px;top:385px" width="6" height="7" viewBox="0 0 6 7"><rect x="1" y="1.8" width="4" height="5" fill="#243f8f"/><path d="M0.5 1.2h5M2.2 0.4h1.6" stroke="#243f8f" stroke-width="0.8"/><path d="M2.4 3v3M3.6 3v3" stroke="#9aa8d0" stroke-width="0.5"/></svg>
<div class="a" style="left:135.5px;top:384px;width:1px;height:9px;background:#e6e6e6"></div>
<div class="a" style="left:151.8px;top:384px;width:1px;height:9px;background:#e6e6e6"></div>
<div class="a" style="left:167.6px;top:384px;width:1px;height:9px;background:#e6e6e6"></div>
<div class="a" style="left:183.4px;top:384px;width:1px;height:9px;background:#e6e6e6"></div>
<div class="a" style="left:198.7px;top:384px;width:1px;height:9px;background:#e6e6e6"></div>
<div class="a" style="left:214.8px;top:384px;width:1px;height:9px;background:#e6e6e6"></div>
<div class="a" style="left:230.6px;top:384px;width:1px;height:9px;background:#e6e6e6"></div>
<div class="a" style="left:120.5px;top:394.5px;width:744.5px;height:1px;background:#e6e6e6"></div>
<!-- text -->
<div class="a" style="left:128.6px;top:397px;width:0;height:34px;border-left:1px dotted #bbb"></div>
<div class="a" style="left:125.6px;top:415.8px;width:5px;height:5px;border-radius:3px;border:0.7px solid #aaa;background:#fff"></div>
<div class="t c" style="left:134.7px;top:399.4px">INFO: [USF-XSim-96] XSim completed. Design snapshot 'test_behav' loaded.</div>
<div class="t c" style="left:134.7px;top:409.1px">INFO: [USF-XSim-97] XSim simulation ran for 1000ns</div>
<div class="t c" style="left:134.7px;top:418.7px">launch_simulation: Time (s): cpu = 00:00:05 ; elapsed = 00:00:29 . Memory (MB): peak = 2326.020 ; gain = 0.000</div>
<div class="a" style="left:134.5px;top:422px;width:1px;height:7px;background:#222"></div>
<!-- h scrollbar -->
<div class="a" style="left:133px;top:432px;width:720px;height:6.5px;background:#f6f6f6"></div>
<svg style="left:136.5px;top:433.2px" width="3" height="4" viewBox="0 0 3 4"><path d="M2.6 0.3L0.5 2L2.6 3.7" stroke="#444" stroke-width="0.8" fill="none"/></svg>
<div class="a" style="left:142.5px;top:433.8px;width:654.5px;height:3.2px;border-radius:1.6px;background:#bcbcbc"></div>
<svg style="left:847.5px;top:433.2px" width="3" height="4" viewBox="0 0 3 4"><path d="M0.4 0.3L2.5 2L0.4 3.7" stroke="#444" stroke-width="0.8" fill="none"/></svg>
<!-- v scrollbar -->
<div class="a" style="left:852px;top:396px;width:7px;height:36px;background:#f6f6f6"></div>
<svg style="left:853px;top:398.5px" width="5" height="3" viewBox="0 0 5 3"><path d="M0.4 2.6L2.5 0.5L4.6 2.6" stroke="#444" stroke-width="0.8" fill="none"/></svg>
<div class="a" style="left:854px;top:409.5px;width:3px;height:13px;border-radius:1.5px;background:#b8b8b8"></div>
<svg style="left:853px;top:426.5px" width="5" height="3" viewBox="0 0 5 3"><path d="M0.4 0.4L2.5 2.5L4.6 0.4" stroke="#444" stroke-width="0.8" fill="none"/></svg>
<div class="a" style="left:859.5px;top:408.5px;width:3.5px;height:4px;background:#f0d020"></div>
<div class="a" style="left:859.5px;top:416px;width:3.5px;height:4px;background:#f0d020"></div>
<!-- input -->
<div class="a" style="left:122.5px;top:440.5px;width:739px;height:11.5px;background:#fff;border:1px solid #d4d4d4"></div>
<div class="t c" style="left:124.5px;top:446.2px;color:#999">Type a Tcl command here</div>
<!-- panel ctrl icons (partly hidden) -->
<div class="t" style="left:828.5px;top:375px;font-size:6px;color:#999">?</div>
<div class="a" style="left:837px;top:377px;width:4px;height:1px;background:#999"></div>
<div class="a" style="left:845.5px;top:373px;width:4.5px;height:4.5px;border:1px solid #aaa"></div>
<div class="a" style="left:854px;top:373px;width:4.5px;height:4.5px;border:1px solid #aaa"></div>


<div class="a" id="status" style="left:4px;top:455px;width:861px;height:9px;background:#ececec"></div>
<div class="a" style="left:0;top:464px;width:865px;height:5px;background:linear-gradient(#8c8c8c,#cfcfcf 35%,#dedede 60%,#e0e0e0)"></div>
<div class="a" style="left:4px;top:465.8px;width:44px;height:1.8px;background:repeating-linear-gradient(90deg,#333 0,#333 1.6px,#bbb 1.6px,#bbb 2.6px);opacity:.75"></div>
<div class="a" style="left:61px;top:465.8px;width:20px;height:1.8px;background:repeating-linear-gradient(90deg,#444 0,#444 1.5px,#bbb 1.5px,#bbb 2.7px);opacity:.7"></div>
<div class="a" style="left:92px;top:466px;width:5px;height:1.5px;background:#666;opacity:.6"></div>
<div class="a" style="left:111px;top:465.8px;width:20px;height:1.8px;background:repeating-linear-gradient(90deg,#444 0,#444 1.4px,#bbb 1.4px,#bbb 2.5px);opacity:.7"></div>
<div class="a" style="left:752px;top:465.6px;width:12px;height:2.4px;background:#b4b4b4"></div>
<div class="a" style="left:741px;top:466px;width:2px;height:1.5px;background:#555;opacity:.6"></div>
<div class="a" style="left:776px;top:466px;width:3px;height:1.5px;background:#555;opacity:.6"></div>
<div class="a" style="left:821px;top:466px;width:3px;height:1.5px;background:#555;opacity:.6"></div>
<div class="a" style="left:849px;top:465.8px;width:16px;height:1.8px;background:repeating-linear-gradient(90deg,#444 0,#444 1.4px,#bbb 1.4px,#bbb 2.5px);opacity:.6"></div>
<!-- IME bar -->
<div class="a" style="left:770px;top:359.5px;width:95px;height:16.5px;background:#ececec"></div>
<div class="a" style="left:772.5px;top:364.5px;width:1px;height:8px;background:#aaa"></div>
<div class="t" style="left:779px;top:369px;font-size:9.4px;color:#333;font-family:'Noto Sans CJK SC',sans-serif;transform:translateY(-50%)">英</div>
<svg style="left:794px;top:363.8px" width="9" height="10" viewBox="0 0 9 10"><path d="M4.2 0.7A4.5 4.5 0 1 1 0.7 8.2A5.4 5.4 0 0 0 4.2 0.7Z" fill="none" stroke="#333" stroke-width="1"/></svg>
<div class="a" style="left:809px;top:365px;width:2.2px;height:2.2px;border-radius:1.1px;background:#222"></div>
<svg style="left:812.5px;top:367.5px" width="3" height="4" viewBox="0 0 3 4"><path d="M0.6 0.3h1.8L1.4 3.6H0.4Z" fill="#222"/></svg>
<div class="t" style="left:822.5px;top:369px;font-size:9.4px;color:#333;font-family:'Noto Sans CJK SC',sans-serif;transform:translateY(-50%)">简</div>
<svg style="left:837px;top:363.5px" width="10" height="10" viewBox="0 0 10 10"><circle cx="5" cy="5" r="4.3" fill="none" stroke="#333" stroke-width="0.8"/><circle cx="3.4" cy="3.8" r="0.6" fill="#333"/><circle cx="6.6" cy="3.8" r="0.6" fill="#333"/><path d="M2.8 6.2Q5 8 7.2 6.2" stroke="#333" stroke-width="0.7" fill="none"/></svg>
<svg style="left:851px;top:363.5px" width="10" height="10" viewBox="0 0 10 10"><circle cx="5" cy="5" r="3.4" fill="none" stroke="#333" stroke-width="0.8"/><circle cx="5" cy="5" r="1.5" fill="none" stroke="#333" stroke-width="0.7"/><path d="M5 0.4v1.4M5 8.2v1.4M0.4 5h1.4M8.2 5h1.4M1.7 1.7l1 1M7.3 7.3l1 1M8.3 1.7l-1 1M2.7 7.3l-1 1" stroke="#333" stroke-width="1"/></svg>
<!-- perf widget -->
<div class="a" style="left:716px;top:443.8px;width:46px;height:17.6px;border-radius:9px;background:#fbfbfb;box-shadow:0 0 2px rgba(0,0,0,.3)"></div>
<div class="a" style="left:695.8px;top:437.7px;width:27.6px;height:27.6px;border-radius:14px;background:#fafafa;border:3.3px solid #46cf6c;box-shadow:0 0 1.6px 0.4px rgba(70,207,108,.85)"></div>
<div class="t" style="left:701.6px;top:452.6px;font-size:10.2px;color:#505050;letter-spacing:-0.35px;transform:translateY(-50%)">67<span style="font-size:5.4px;font-weight:bold;letter-spacing:0">%</span></div>
<div class="t" style="left:726.5px;top:448.6px;font-size:5px;color:#2a8ae0;font-weight:bold;transform:translateY(-50%)">↑</div>
<div class="t" style="left:733px;top:448.7px;font-size:4.3px;color:#222;font-weight:bold;transform:translateY(-50%)">0.00K/s</div>
<div class="t" style="left:726px;top:457.2px;font-size:4.4px;color:#555;transform:translateY(-50%)">CPU <span style="color:#2cc060;font-weight:bold;font-size:4.3px">55℃</span></div>
<div class="a" style="left:750.1px;top:448.5px;width:8px;height:8px;border-radius:4px;background:#2a88f0"></div>
<div class="a" style="left:752.4px;top:450.8px;width:3.4px;height:3.4px;border-radius:2px;background:#a8d0fa"></div>
<div class="a" style="left:756.4px;top:449.2px;width:3.2px;height:3.2px;border-radius:2px;background:#f04030"></div>

</div></body></html>
